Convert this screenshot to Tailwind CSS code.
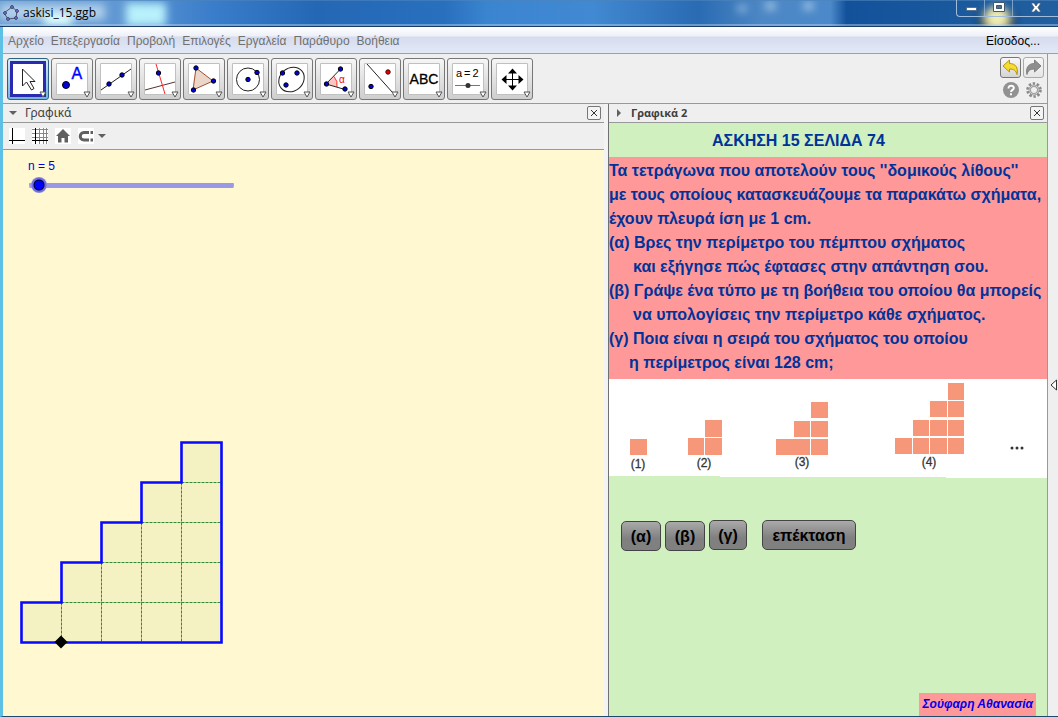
<!DOCTYPE html>
<html lang="el">
<head>
<meta charset="utf-8">
<title>askisi_15.ggb</title>
<script src="https://cdn.jsdelivr.net/npm/@tailwindcss/browser@4"></script>
</head>
<body class="flex h-screen flex-col overflow-hidden bg-[#efefef] font-['Noto_Sans','Liberation_Sans',sans-serif] text-xs">

<!-- Window title bar -->
<header class="relative flex h-[27px] shrink-0 overflow-hidden border-b border-[#1b3c68] bg-linear-to-r from-[#7ba9d8] via-[#2a6fbd] to-[#14529b]">
  <svg class="absolute inset-0 h-full w-full" viewBox="0 0 1058 26" preserveAspectRatio="none" aria-hidden="true">
    <defs>
      <filter id="soft" x="-40%" y="-60%" width="180%" height="220%"><feGaussianBlur stdDeviation="4"/></filter>
      <linearGradient id="sky" x1="0" x2="1" y1="0" y2="0">
        <stop offset="0" stop-color="#6c9fd2"/><stop offset=".12" stop-color="#5f97d3"/><stop offset=".2" stop-color="#3a7dca"/><stop offset=".3" stop-color="#2467b5"/><stop offset=".42" stop-color="#2870be"/><stop offset=".46" stop-color="#3b84d0"/><stop offset=".56" stop-color="#4189d2"/><stop offset=".66" stop-color="#2a6bb3"/><stop offset=".72" stop-color="#4d87c4"/><stop offset=".785" stop-color="#4b89ca"/><stop offset=".8" stop-color="#13529b"/><stop offset="1" stop-color="#215f9f"/>
      </linearGradient>
    </defs>
    <rect width="1058" height="26" fill="url(#sky)"/>
    <g filter="url(#soft)">
      <rect x="0" y="4" width="105" height="16" fill="#c9e2f3" opacity=".75"/>
      <rect x="44" y="14" width="28" height="12" fill="#e0ffff"/>
      <rect x="126" y="3" width="40" height="23" fill="#b8f0fb"/>
      <rect x="738" y="6" width="8" height="5" fill="#b9d6ee"/>
      <rect x="766" y="3" width="9" height="6" fill="#c5def2"/>
      <rect x="804" y="3" width="9" height="6" fill="#c5def2"/>
      <ellipse cx="997" cy="22" rx="18" ry="15" fill="#1b2b3b"/>
      <ellipse cx="997" cy="18" rx="12" ry="12" fill="#f2edb0"/>
    </g>
    <path d="M0 .5H1058" stroke="#4d84bb" opacity=".6"/>
    <path d="M0 25H1058" stroke="#b6d4f0" stroke-width="1" opacity=".9"/>
  </svg>
  <div class="relative flex items-center gap-1 pl-[3px]">
    <svg class="size-4" viewBox="0 0 16 16" fill="none" aria-hidden="true">
      <path d="M9 2 14 6 13 13 5 14 1 8Z" stroke="#49566e"/>
      <g fill="#8c8cff" stroke="#20204d" stroke-width=".8"><circle cx="9" cy="2" r="1.4"/><circle cx="14" cy="6" r="1.4"/><circle cx="13" cy="13" r="1.4"/><circle cx="5" cy="14" r="1.4"/><circle cx="2" cy="8" r="1.4"/></g>
    </svg>
    <h1 class="pb-px font-['Open_Sans','Noto_Sans',sans-serif] text-xs text-black">askisi_15.ggb</h1>
  </div>
  <div class="relative ml-auto flex h-[17px] w-[102px] overflow-hidden rounded-bl border-b border-l border-[#9fbcdb] text-white">
    <button aria-label="Ελαχιστοποίηση" class="flex w-7 items-center justify-center border-r border-[#9fbcdb]/70"><svg class="h-4 w-4" viewBox="0 0 16 16"><path d="M3.500 7.500h10v3h-10z" fill="#fff" stroke="#425770" stroke-width=".7"/></svg></button>
    <button aria-label="Μεγιστοποίηση" class="flex w-7 items-center justify-center border-r border-[#9fbcdb]/70"><svg class="h-4 w-4" viewBox="0 0 16 16"><path d="M2.500 2.500h11v9h-11z" fill="#fff" stroke="#425770"/><path d="M5.500 5.500h5v3h-5z" fill="#53708b" stroke="#425770"/></svg></button>
    <button aria-label="Κλείσιμο" class="flex flex-1 items-center justify-center"><svg class="h-4 w-4" viewBox="0 0 16 16"><path d="M3 3h3l2 3 2-3h3L10 7.500 13 12h-3L8 9.500 6 12H3L6 7.500Z" fill="#fff" stroke="#425770" stroke-width=".8"/></svg></button>
  </div>
</header>

<div class="flex min-h-0 flex-1 flex-col border-b border-l-3 border-b-[#1c4a6c] border-l-[#5fc0e6]">

<!-- Menu bar -->
<nav class="flex h-[27px] shrink-0 items-center border-b border-[#a0a0a0] bg-[linear-gradient(to_bottom,#ffffff_0,#eef0f8_9px,#d6dcee_10px,#e2e9f6_100%)] pt-px pr-[18px] pl-[5px] font-['Liberation_Sans',sans-serif] text-[#707070]">
  <div class="flex flex-1 gap-[7px]">
    <a href="#">Αρχείο</a><a href="#">Επεξεργασία</a><a href="#">Προβολή</a><a href="#">Επιλογές</a><a href="#">Εργαλεία</a><a href="#">Παράθυρο</a><a href="#">Βοήθεια</a>
  </div>
  <a href="#" class="text-black">Είσοδος...</a>
</nav>

<div class="flex min-h-0 flex-1">
<div class="flex min-w-0 flex-1 flex-col border-r border-[#999]">

<!-- Tool bar -->
<div class="flex h-[50px] shrink-0 items-center border-b border-[#999] pr-[3px] pl-1">
  <div class="flex flex-1 gap-[2px]">
    <button aria-label="Μετακίνηση" class="size-[42px] rounded-[3px] border border-[#2c6087] bg-linear-to-b from-[#d9edf8] to-[#6fb5dc]"><svg class="size-10" viewBox="0 0 40 40"><path d="M3.500 3.500h33v33h-33z" fill="#fff" stroke="#2a2ab0" stroke-width="3"/><path d="M14.500 10v17l4-4 5 8 2.500-1.500-4-7h5Z" fill="#fff" stroke="#222"/><path d="M32 33h6l-3 5z" fill="#fff" stroke="#555"/></svg></button>
    <button aria-label="Σημείο" class="size-[42px] rounded-[3px] border border-[#777] bg-linear-to-b from-[#f6f6f6] to-[#cecece]"><svg class="size-10" viewBox="0 0 40 40"><path d="M4.500 4.500h31v31h-31z" fill="#fff" stroke="#c0c0c0"/><circle cx="14" cy="26" r="3.500" fill="#00d" stroke="#000"/><text x="19.500" y="20" font-family="Liberation Sans" font-size="16" stroke="#00f" stroke-width=".4" fill="#00f">A</text><path d="M32 33h6l-3 5z" fill="#fff" stroke="#555"/></svg></button>
    <button aria-label="Ευθεία" class="size-[42px] rounded-[3px] border border-[#777] bg-linear-to-b from-[#f6f6f6] to-[#cecece]"><svg class="size-10" viewBox="0 0 40 40"><path d="M4.500 4.500h31v31h-31z" fill="#fff" stroke="#c0c0c0"/><path d="M5 31 35 10" stroke="#222"/><g fill="#00d" stroke="#000"><circle cx="13" cy="25" r="2.200"/><circle cx="26" cy="16" r="2.200"/></g><path d="M32 33h6l-3 5z" fill="#fff" stroke="#555"/></svg></button>
    <button aria-label="Κάθετη ευθεία" class="size-[42px] rounded-[3px] border border-[#777] bg-linear-to-b from-[#f6f6f6] to-[#cecece]"><svg class="size-10" viewBox="0 0 40 40"><path d="M4.500 4.500h31v31h-31z" fill="#fff" stroke="#c0c0c0"/><path d="M5 31 35 23" stroke="#533"/><path d="M16 5 25 35" stroke="#f22"/><circle cx="18.500" cy="14" r="2.200" fill="#00d" stroke="#000"/><path d="M32 33h6l-3 5z" fill="#fff" stroke="#555"/></svg></button>
    <button aria-label="Πολύγωνο" class="size-[42px] rounded-[3px] border border-[#777] bg-linear-to-b from-[#f6f6f6] to-[#cecece]"><svg class="size-10" viewBox="0 0 40 40"><path d="M4.500 4.500h31v31h-31z" fill="#fff" stroke="#c0c0c0"/><path d="M12 9 29 22 9 31Z" fill="#ebd6ca" stroke="#a05030"/><g fill="#00d" stroke="#000"><circle cx="12" cy="9" r="2.200"/><circle cx="29.500" cy="22" r="2.200"/><circle cx="9.500" cy="31" r="2.200"/></g><path d="M32 33h6l-3 5z" fill="#fff" stroke="#555"/></svg></button>
    <button aria-label="Κύκλος" class="size-[42px] rounded-[3px] border border-[#777] bg-linear-to-b from-[#f6f6f6] to-[#cecece]"><svg class="size-10" viewBox="0 0 40 40"><path d="M4.500 4.500h31v31h-31z" fill="#fff" stroke="#c0c0c0"/><circle cx="20" cy="20.500" r="11.500" fill="none" stroke="#222"/><g fill="#00d" stroke="#000"><circle cx="20" cy="20.500" r="2.200"/><circle cx="29" cy="13.500" r="2.200"/></g><path d="M32 33h6l-3 5z" fill="#fff" stroke="#555"/></svg></button>
    <button aria-label="Έλλειψη" class="size-[42px] rounded-[3px] border border-[#777] bg-linear-to-b from-[#f6f6f6] to-[#cecece]"><svg class="size-10" viewBox="0 0 40 40"><path d="M4.500 4.500h31v31h-31z" fill="#fff" stroke="#c0c0c0"/><ellipse cx="19.500" cy="20.500" rx="13.500" ry="11.500" transform="rotate(-40 19.500 20.500)" fill="none" stroke="#222"/><g fill="#00d" stroke="#000"><circle cx="10.500" cy="14" r="2.200"/><circle cx="25" cy="14" r="2.200"/><circle cx="14" cy="26" r="2.200"/></g><path d="M32 33h6l-3 5z" fill="#fff" stroke="#555"/></svg></button>
    <button aria-label="Γωνία" class="size-[42px] rounded-[3px] border border-[#777] bg-linear-to-b from-[#f6f6f6] to-[#cecece]"><svg class="size-10" viewBox="0 0 40 40"><path d="M4.500 4.500h31v31h-31z" fill="#fff" stroke="#c0c0c0"/><path d="M10 25 18 17.500Q22 22 21 28Z" fill="#ffc4c4"/><path d="M18 17.500Q22 22 21 28" fill="none" stroke="#f33"/><path d="M24.500 10 10 25 29 30.500" fill="none" stroke="#222"/><g fill="#00d" stroke="#000"><circle cx="24.500" cy="10" r="2.200"/><circle cx="10.500" cy="25" r="2.200"/><circle cx="29" cy="30" r="2.200"/></g><text x="23" y="24" font-family="Liberation Sans" font-size="10" fill="#f00">α</text><path d="M32 33h6l-3 5z" fill="#fff" stroke="#555"/></svg></button>
    <button aria-label="Ανάκλαση" class="size-[42px] rounded-[3px] border border-[#777] bg-linear-to-b from-[#f6f6f6] to-[#cecece]"><svg class="size-10" viewBox="0 0 40 40"><path d="M4.500 4.500h31v31h-31z" fill="#fff" stroke="#c0c0c0"/><path d="M7 5 33 34" stroke="#222"/><circle cx="28" cy="13" r="2.200" fill="#e00" stroke="#400"/><circle cx="11" cy="27.500" r="2.200" fill="#00d" stroke="#000"/><path d="M32 33h6l-3 5z" fill="#fff" stroke="#555"/></svg></button>
    <button aria-label="Κείμενο" class="size-[42px] rounded-[3px] border border-[#777] bg-linear-to-b from-[#f6f6f6] to-[#cecece]"><svg class="size-10" viewBox="0 0 40 40"><path d="M4.500 4.500h31v31h-31z" fill="#fff" stroke="#c0c0c0"/><text x="20" y="25" text-anchor="middle" font-family="Liberation Sans" font-size="14" stroke="#000" stroke-width=".3">ABC</text><path d="M32 33h6l-3 5z" fill="#fff" stroke="#555"/></svg></button>
    <button aria-label="Δρομέας" class="size-[42px] rounded-[3px] border border-[#777] bg-linear-to-b from-[#f6f6f6] to-[#cecece]"><svg class="size-10" viewBox="0 0 40 40"><path d="M4.500 4.500h31v31h-31z" fill="#fff" stroke="#c0c0c0"/><text x="8" y="18" font-family="Liberation Sans" font-size="11">a</text><text x="16" y="18" font-family="Liberation Sans" font-size="11">=</text><text x="24.500" y="18" font-family="Liberation Sans" font-size="11">2</text><path d="M7 26.500h25" stroke="#777"/><circle cx="20" cy="26.500" r="2.500" fill="#333"/><path d="M32 33h6l-3 5z" fill="#fff" stroke="#555"/></svg></button>
    <button aria-label="Μετακίνηση σχεδίου" class="size-[42px] rounded-[3px] border border-[#777] bg-linear-to-b from-[#f6f6f6] to-[#cecece]"><svg class="size-10" viewBox="0 0 40 40"><path d="M4.500 4.500h31v31h-31z" fill="#fff" stroke="#c0c0c0"/><path d="M20.500 12v18M12 20.500h17" stroke="#000"/><path d="M16 14.500 20.500 9.500l4.500 5zM16 26.500l4.500 5 4.500-5zM14.500 16l-5 4.500 5 4.500zM26.500 16l5 4.500-5 4.500z"/><path d="M32 33h6l-3 5z" fill="#fff" stroke="#555"/></svg></button>
  </div>
  <div class="grid grid-cols-2 items-center justify-items-center gap-x-[2px] gap-y-[2px]">
    <button aria-label="Αναίρεση" class="size-[21px] rounded-[3px] border border-[#777] bg-linear-to-b from-[#f8f8f8] to-[#d4d4d4]"><svg class="size-[19px]" viewBox="0 0 19 19"><path d="M2 8 8.500 2v3.500c6 0 9 4 7.500 11-.8-4-3.500-5.500-7.500-5.500v3Z" fill="#f6dc30" stroke="#b8940c"/></svg></button>
    <button aria-label="Επανάληψη" class="size-[21px] rounded-[3px] border border-[#aaa] bg-linear-to-b from-[#f6f6f6] to-[#e6e6e6]"><svg class="size-[19px]" viewBox="0 0 19 19"><path d="M17 8 10.500 2v3.500c-6 0-9 4-7.500 11 .8-4 3.500-5.500 7.500-5.500v3Z" fill="#8e8e8e" stroke="#808080"/></svg></button>
    <button aria-label="Βοήθεια" class="flex size-5 items-center justify-center"><svg class="size-4" viewBox="0 0 16 16"><circle cx="8" cy="8" r="8" fill="#929292"/><path d="M5.500 6.500C5.500 2.500 11 3 10.800 6.200 10.600 7.800 8 8 8 10" fill="none" stroke="#fff" stroke-width="2"/><path d="M7 11.200h2v2H7z" fill="#fff"/></svg></button>
    <button aria-label="Ρυθμίσεις" class="flex size-5 items-center justify-center"><svg class="size-4" viewBox="0 0 16 16" fill="none"><circle cx="8" cy="8" r="6.500" stroke="#8a8a8a" stroke-width="2.600" stroke-dasharray="2.400 1.680"/><circle cx="8" cy="8" r="4.200" fill="#efefef" stroke="#8f8f8f" stroke-width="2.400"/><circle cx="8" cy="8" r="4.300" stroke="#d2d2d2"/></svg></button>
  </div>
</div>

<div class="flex min-h-0 flex-1">

<!-- Graphics view -->
<section class="flex min-w-0 flex-[601] flex-col">
  <div class="flex h-[19px] shrink-0 items-center border-b border-[#999] pr-[3px] pl-[6px]">
    <svg class="mr-2 h-2 w-2" viewBox="0 0 8 8" aria-hidden="true"><path d="M0 2h8L4 6Z" fill="#606060"/></svg>
    <h2 class="flex-1 text-[#404040]">Γραφικά</h2>
    <button aria-label="Κλείσιμο Γραφικά" class="size-[14px] rounded-[2px] border border-[#777] bg-[#f4f4f4]"><svg class="size-3" viewBox="0 0 12 12"><path d="m3 3 6 6m0-6L3 9" stroke="#333"/></svg></button>
  </div>
  <div class="flex h-[27px] shrink-0 items-center gap-[7px] border-b border-[#999] pl-[6px]">
    <button aria-label="Άξονες"><svg class="block size-4" viewBox="0 0 16 16"><path d="M0 0h16v16H0z" fill="#fff"/><path d="M3.500 0v16M0 12.500h16" stroke="#000"/></svg></button>
    <button aria-label="Πλέγμα"><svg class="block size-4" viewBox="0 0 16 16"><path d="M0 0h16v16H0z" fill="#fff"/><path d="M7.500 0v16M11.500 0v16M14.500 0v16M0 1.500h16M0 5.500h16M0 9.500h16" stroke="#888"/><path d="M3.500 0v16M0 12.500h16" stroke="#000"/></svg></button>
    <button aria-label="Κανονική προβολή"><svg class="block size-4" viewBox="0 0 16 16"><path d="M0 0h16v16H0z" fill="#fff"/><path d="M8 1 15 8h-2v6.500H9.500V10h-3v4.500H3V8H1Z" fill="#606060"/></svg></button>
    <button aria-label="Σύλληψη σημείου" class="flex items-center gap-1"><svg class="size-4" viewBox="0 0 16 16"><path d="M0 0h16v16H0z" fill="#fff"/><path d="M11 4.500H6C1 4.500 1 12 6 12H11" fill="none" stroke="#606060" stroke-width="3"/><path d="M12.500 3H15v3h-2.500zM12.500 10.500H15v3h-2.500z" fill="#606060"/></svg><svg class="h-2 w-2" viewBox="0 0 8 8"><path d="M0 2h8L4 6Z" fill="#606060"/></svg></button>
  </div>
  <div class="flex flex-1 flex-col bg-[#fff8d0] pt-2">
    <label for="n" class="ml-[25px] font-['Liberation_Sans',sans-serif] leading-4 text-[#0000e0]">n = 5</label>
    <input id="n" type="range" min="1" max="400" value="5" class="mt-[3px] ml-[26px] h-4 w-[205px] appearance-none rounded-full bg-[linear-gradient(#9999e5,#9999e5)] bg-[length:100%_5px] bg-center bg-no-repeat [&::-webkit-slider-thumb]:size-4 [&::-webkit-slider-thumb]:appearance-none [&::-webkit-slider-thumb]:rounded-full [&::-webkit-slider-thumb]:border-0 [&::-webkit-slider-thumb]:bg-[radial-gradient(circle,#0000ff_0_4px,#000022_5px_5px,#6f6fe2_6px_7px,#9999e5_8px)]">
    <svg class="mt-auto mb-[67px] ml-3 h-[212px] w-[212px]" viewBox="0 0 212 212" role="img" aria-label="Σχήμα 5">
      <path d="M6.500 205.500v-40h40v-40h40v-40h40v-40h40v-40h40v200Z" fill="#f4f2c3"/>
      <path d="M46.500 165.500v40M86.500 125.500v80M126.500 85.500v120M166.500 45.500v160M46.500 165.500h160M86.500 125.500h120M126.500 85.500h80M166.500 45.500h40" fill="none" stroke="#2f8a30" stroke-dasharray="3 1"/>
      <path d="M6.500 205.500v-40h40v-40h40v-40h40v-40h40v-40h40v200Z" fill="none" stroke="#0808ff" stroke-width="2.600"/>
      <path d="M46 198.500 52.500 205 46 211.500 39.500 205Z"/>
    </svg>
  </div>
</section>

<div class="w-1 shrink-0 bg-[#f3f3f3]"></div>

<!-- Graphics view 2 -->
<section class="flex min-w-0 flex-[438] flex-col border-l border-[#707070]">
  <div class="flex h-[19px] shrink-0 items-center border-b border-[#999] pr-[3px] pl-[6px]">
    <svg class="mr-2 h-2 w-2" viewBox="0 0 8 8" aria-hidden="true"><path d="M2 0v8l4-4Z" fill="#606060"/></svg>
    <h2 class="flex-1 font-['Open_Sans','Noto_Sans',sans-serif] text-[11px] font-bold text-[#404040]">Γραφικά 2</h2>
    <button aria-label="Κλείσιμο Γραφικά 2" class="size-[14px] rounded-[2px] border border-[#777] bg-[#f4f4f4]"><svg class="size-3" viewBox="0 0 12 12"><path d="m3 3 6 6m0-6L3 9" stroke="#333"/></svg></button>
  </div>
  <div class="flex min-h-0 flex-1 flex-col bg-[#d0f0c0] font-['Liberation_Sans',sans-serif]">
    <h3 class="h-[34px] pt-px pl-[103px] text-base leading-[34px] font-bold text-[#003399]">ΑΣΚΗΣΗ 15 ΣΕΛΙΔΑ 74</h3>
    <div class="h-[222px] bg-[#ff9999] pt-[2px] text-base leading-6 font-bold whitespace-nowrap text-[#003399]">
      <p>Τα τετράγωνα που αποτελούν τους ''δομικούς λίθους''</p>
      <p>με τους οποίους κατασκευάζουμε τα παρακάτω σχήματα,</p>
      <p>έχουν πλευρά ίση με 1 cm.</p>
      <p>(α) Βρες την περίμετρο του πέμπτου σχήματος</p>
      <p class="pl-6">και εξήγησε πώς έφτασες στην απάντηση σου.</p>
      <p>(β) Γράψε ένα τύπο με τη βοήθεια του οποίου θα μπορείς</p>
      <p class="pl-6">να υπολογίσεις την περίμετρο κάθε σχήματος.</p>
      <p>(γ) Ποια είναι η σειρά του σχήματος του οποίου</p>
      <p class="pl-5">η περίμετρος είναι 128 cm;</p>
    </div>
    <svg class="block w-full" viewBox="0 0 438 100" role="img" aria-label="Τα τέσσερα πρώτα σχήματα">
      <path d="M0 0h438v99H337v-1H111v-1H0Z" fill="#fff"/>
      <g fill="#f79779">
        <path d="M21 60h17v16H21z"/>
        <path d="M79 59h16v17H79zM96 59h17v17H96zM96 41h17v17H96z"/>
        <path d="M167 60h34v16h-34zM202 60h17v16h-17zM185 42h16v16h-16zM202 42h17v16h-17zM202 23h17v16h-17z"/>
        <path d="M286 59h17v16h-17zM304 59h16v16h-16zM321 59h17v16h-17zM339 59h16v16h-16zM304 41h16v16h-16zM321 41h17v16h-17zM339 41h16v16h-16zM321 22h17v16h-17zM339 22h16v16h-16zM339 4h16v17h-16z"/>
      </g>
      <g font-family="Liberation Sans" font-size="12" fill="#333" stroke="#333" stroke-width=".3" text-anchor="middle">
        <text x="29" y="89">(1)</text><text x="95" y="88">(2)</text><text x="193" y="87">(3)</text><text x="320" y="87">(4)</text>
      </g>
      <g fill="#333"><circle cx="403" cy="69" r="1.500"/><circle cx="408" cy="69" r="1.500"/><circle cx="413" cy="69" r="1.500"/></g>
    </svg>
    <div class="mt-[41px] flex items-start gap-1 pl-3 text-base font-bold text-black">
      <button class="mt-px h-[30px] w-10 rounded-[5px] border border-[#444] bg-linear-to-b from-[#aaa] to-[#808080] to-60% pt-[2px]">(α)</button>
      <button class="mt-px h-[30px] w-10 rounded-[5px] border border-[#444] bg-linear-to-b from-[#aaa] to-[#808080] to-60% pt-[2px]">(β)</button>
      <button class="h-[30px] w-[38px] rounded-[5px] border border-[#444] bg-linear-to-b from-[#aaa] to-[#808080] to-60% pt-[2px]">(γ)</button>
      <button class="ml-[11px] h-[30px] w-[94px] rounded-[5px] border border-[#444] bg-linear-to-b from-[#aaa] to-[#808080] to-60% pt-[2px]">επέκταση</button>
    </div>
    <p class="mt-auto mr-[11px] h-[23px] self-end bg-[#ff9999] px-[3px] text-xs leading-[22px] font-bold text-[#0000ee] italic">Σούφαρη Αθανασία</p>
  </div>
</section>
</div>
</div>

<!-- Collapsed input side bar -->
<button aria-label="Εμφάνιση πλαϊνής στήλης" class="flex w-[10px] shrink-0 items-center justify-center"><svg class="h-3 w-[7px]" viewBox="0 0 7 12"><path d="M6.500 1v10L1 6Z" fill="#fff" stroke="#333"/></svg></button>
</div>
</div>
</body>
</html>
